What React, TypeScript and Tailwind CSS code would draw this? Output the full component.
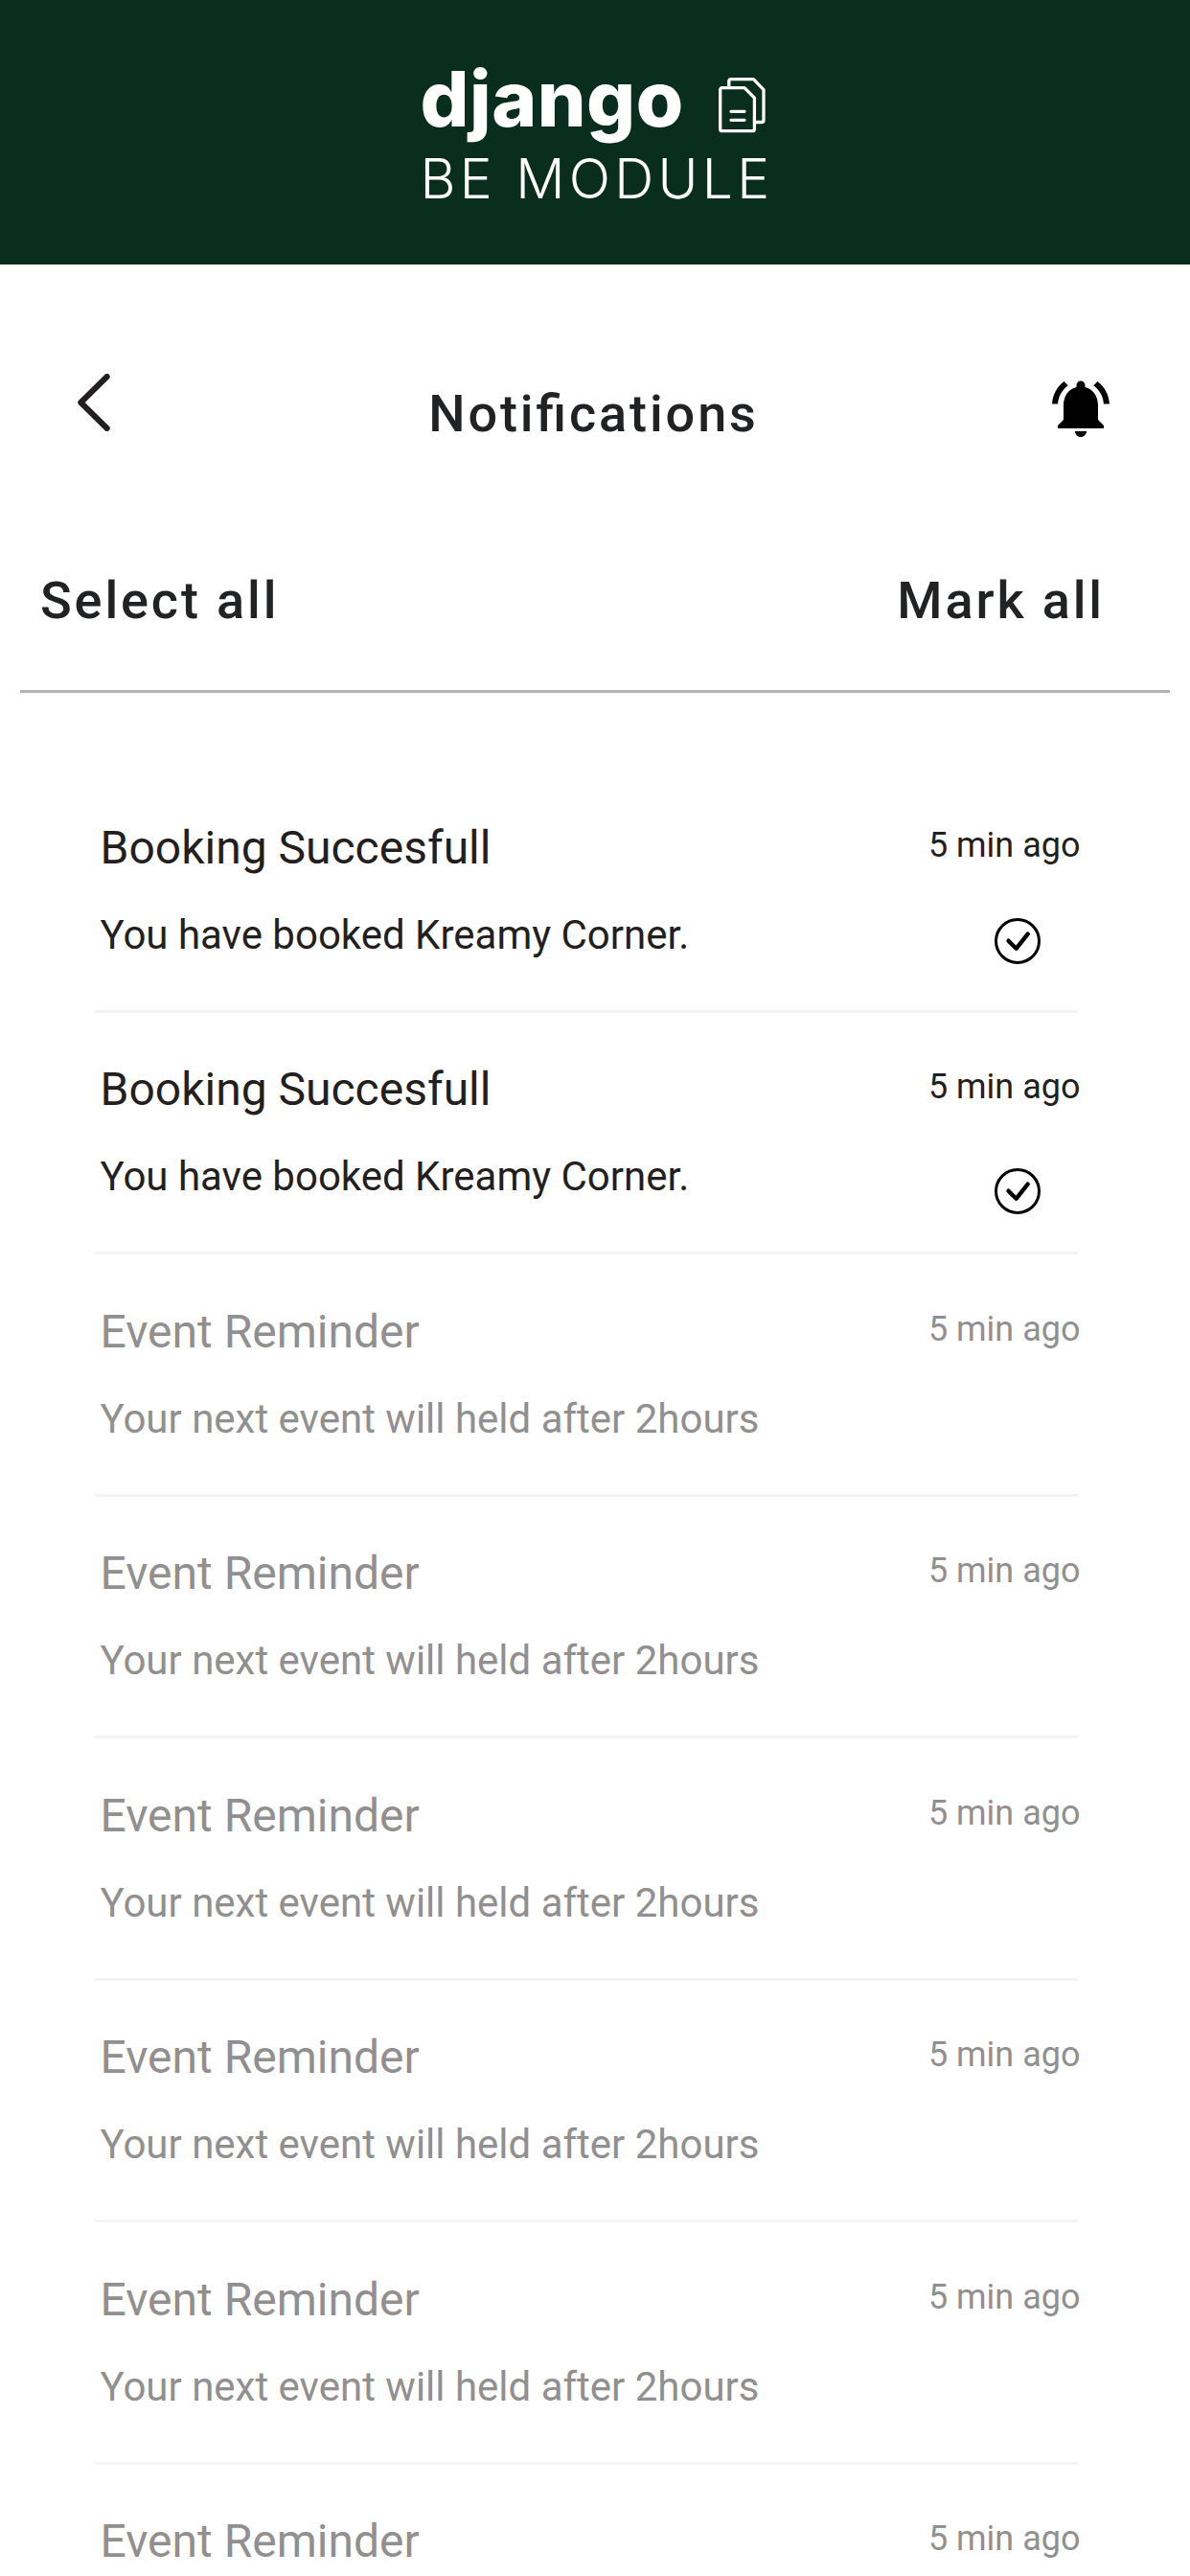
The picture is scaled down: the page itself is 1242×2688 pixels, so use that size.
type Notification = {
  title: string;
  message: string;
  time: string;
  unread?: boolean;
  checkClass?: string;
};

const booking: Notification = {
  title: "Booking Succesfull",
  message: "You have booked Kreamy Corner.",
  time: "5 min ago",
  unread: true,
};

const reminder: Notification = {
  title: "Event Reminder",
  message: "Your next event will held after 2hours",
  time: "5 min ago",
};

const notifications: Notification[] = [
  { ...booking, checkClass: "mt-[55.2px]" },
  { ...booking, checkClass: "mt-[63.7px]" },
  reminder,
  reminder,
  reminder,
  reminder,
  reminder,
  reminder,
];

function DocumentsIcon() {
  return (
    <svg
      width="49"
      height="58"
      viewBox="0 0 49 58"
      fill="none"
      stroke="currentColor"
      strokeWidth="3.3"
      strokeLinejoin="round"
      strokeLinecap="round"
    >
      <path d="M3.7 10.6H27L37.4 21.2V53.7a2 2 0 0 1-2 2H3.7a2 2 0 0 1-2-2V12.6a2 2 0 0 1 2-2Z" />
      <path d="M10.8 10V3.7a2 2 0 0 1 2-2H36.4L47 12.6V44.5a2 2 0 0 1-2 2H38.5" />
      <path d="M13 35.3H27M13 44.3H27" />
    </svg>
  );
}

function BackIcon() {
  return (
    <svg width="34" height="60" viewBox="0 0 34 60" fill="none">
      <path
        d="M30.7 3L3.3 30L30.7 57"
        stroke="#231f20"
        strokeWidth="6"
        strokeLinecap="round"
        strokeLinejoin="round"
      />
    </svg>
  );
}

function BellIcon() {
  return (
    <svg width="72" height="72" viewBox="0 0 24 24" fill="#000">
      <path d="M7.58 4.08L6.15 2.65C3.75 4.48 2.17 7.3 2.03 10.5h2c.15-2.65 1.51-4.97 3.55-6.42zm12.39 6.42h2c-.15-3.2-1.73-6.02-4.12-7.85l-1.42 1.43c2.02 1.45 3.39 3.77 3.54 6.42zM18 11c0-3.07-1.64-5.64-4.5-6.32V4c0-.83-.67-1.5-1.5-1.5s-1.5.67-1.5 1.5v.68C7.63 5.36 6 7.92 6 11v5l-2 2v1h16v-1l-2-2v-5zM12 22c1.1 0 2-.9 2-2h-4c0 1.1.9 2 2 2z" />
    </svg>
  );
}

function CheckIcon() {
  return (
    <svg width="48" height="48" viewBox="0 0 48 48" fill="none" stroke="#000">
      <circle cx="24" cy="24" r="22.5" strokeWidth="3" />
      <path
        d="M14.5 23.7L22.6 31.8L34.7 16.7"
        strokeWidth="4.4"
        strokeLinecap="round"
        strokeLinejoin="round"
      />
    </svg>
  );
}

function NotificationRow({ item }: { item: Notification }) {
  return (
    <li className="h-[252.5px] shrink-0 border-b-[3px] border-[#f4f4f4]">
      <div
        className={
          item.unread
            ? "flex justify-between pl-[5.5px] text-[#231f20]"
            : "flex justify-between pl-[5.5px] text-[#918f8f]"
        }
      >
        <div className="pt-[51.5px]">
          <h2 className="text-[48px] leading-[57px]">{item.title}</h2>
          <p className="mt-[38px] text-[42px] leading-[49px]">{item.message}</p>
        </div>
        <div className="-mr-[3px] flex flex-col items-end pt-[56.5px]">
          <time className="text-[36px] leading-[42px]">{item.time}</time>
          {item.checkClass && (
            <div className={`mr-[41.5px] ${item.checkClass}`}>
              <CheckIcon />
            </div>
          )}
        </div>
      </div>
    </li>
  );
}

export default function App() {
  return (
    <div className="flex h-[2688px] w-[1242px] flex-col overflow-hidden bg-white font-['Roboto',sans-serif]">
      <header className="flex h-[276px] shrink-0 flex-col items-center bg-[#092e20] pt-[54px] font-['Inter',sans-serif] text-white">
        <div className="w-[365px]">
          <div className="flex justify-between pr-[4.5px]">
            <span className="text-[80px] leading-[97px] font-extrabold tracking-[0.5px]">django</span>
            <span className="pt-[27px]">
              <DocumentsIcon />
            </span>
          </div>
          <div className="mt-px text-[57px] leading-[69px] font-light tracking-[4.25px] whitespace-nowrap">
            BE MODULE
          </div>
        </div>
      </header>

      <nav className="flex h-[324px] shrink-0 items-start justify-between pr-[78px] pl-[81px]">
        <button className="mt-[114px] w-[66px]" aria-label="Back">
          <BackIcon />
        </button>
        <h1 className="mt-[124px] text-[54px] leading-[64px] font-medium tracking-[2.9px] text-[#202224] [font-feature-settings:'liga'_1]">
          Notifications
        </h1>
        <button className="mt-[114px]" aria-label="Alerts">
          <BellIcon />
        </button>
      </nav>

      <div className="mx-[21px] flex h-[123px] shrink-0 justify-between border-b-[3px] border-[#b3b3b3] pr-[68px] pl-[21px] text-[54px] leading-[64px] font-medium tracking-[2.88px] text-[#202224]">
        <button className="-mt-[5px] h-[64px]">Select all</button>
        <button className="-mt-[5px] h-[64px]">Mark all</button>
      </div>

      <ul className="mr-[117.5px] ml-[99px] flex flex-col pt-[81.3px]">
        {notifications.map((item, i) => (
          <NotificationRow key={i} item={item} />
        ))}
      </ul>
    </div>
  );
}
